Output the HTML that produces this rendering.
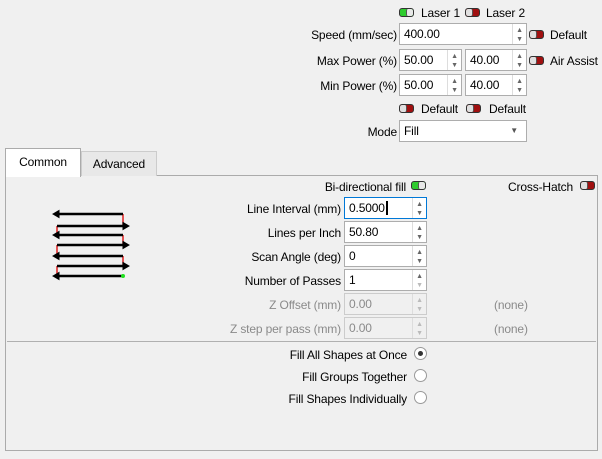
<!DOCTYPE html>
<html><head><meta charset="utf-8"><style>
*{box-sizing:border-box;margin:0;padding:0}
body{width:602px;height:459px;background:#f0f0f0;font-family:"Liberation Sans",sans-serif;font-size:12px;letter-spacing:-0.15px;color:#000;position:relative;overflow:hidden}
.a{position:absolute;white-space:nowrap}
.r{position:absolute;text-align:right;white-space:nowrap}
.in{position:absolute;background:#fff;border:1px solid #adadad;height:22px;line-height:20px;padding-left:4px}
.in.dis{background:#f0f0f0;border-color:#ccc;color:#8a8a8a}
.sp{position:absolute;right:0;top:0;width:14px;height:100%;border-left:1px solid #ddd;font-size:7px;line-height:9px;color:#666;text-align:center;padding-top:2px}
.dis .sp{color:#bbb}
.tg{position:absolute;width:15px;height:9px;border:1px solid #333;border-radius:3px;overflow:hidden}
.tg.on{background:#2ecc2e}.tg.on::after{content:"";position:absolute;right:0;top:0;width:6px;height:7px;background:#e8e8e8;border-left:1px solid #555;border-radius:2px}
.tg.off{background:#a01010}.tg.off::after{content:"";position:absolute;left:0;top:0;width:6px;height:7px;background:#e0e0e0;border-right:1px solid #555;border-radius:2px}
.rad{position:absolute;width:13px;height:13px;border:1px solid #999;border-radius:50%;background:#fff}
.lbl{color:#8a8a8a}
</style></head><body>
<div class="tg on" style="left:399px;top:8px"></div><div class="a" style="left:421px;top:6px">Laser 1</div>
<div class="tg off" style="left:465px;top:8px"></div><div class="a" style="left:486px;top:6px">Laser 2</div>

<div class="r" style="right:205px;top:28px">Speed (mm/sec)</div>
<div class="in" style="left:399px;top:23px;width:128px">400.00<div class="sp">▲<br>▼</div></div>
<div class="tg off" style="left:529px;top:30px"></div><div class="a" style="left:550px;top:28px">Default</div>

<div class="r" style="right:205px;top:54px">Max Power (%)</div>
<div class="in" style="left:399px;top:49px;width:63px">50.00<div class="sp">▲<br>▼</div></div>
<div class="in" style="left:465px;top:49px;width:62px">40.00<div class="sp">▲<br>▼</div></div>
<div class="tg off" style="left:529px;top:56px"></div><div class="a" style="left:550px;top:54px">Air Assist</div>

<div class="r" style="right:205px;top:79px">Min Power (%)</div>
<div class="in" style="left:399px;top:74px;width:63px">50.00<div class="sp">▲<br>▼</div></div>
<div class="in" style="left:465px;top:74px;width:62px">40.00<div class="sp">▲<br>▼</div></div>

<div class="tg off" style="left:399px;top:104px"></div><div class="a" style="left:421px;top:102px">Default</div>
<div class="tg off" style="left:466px;top:104px"></div><div class="a" style="left:489px;top:102px">Default</div>

<div class="r" style="right:205px;top:125px">Mode</div>
<div class="in" style="left:399px;top:120px;width:128px;background:#fff">Fill<span class="a" style="right:8px;top:0;font-size:8px;color:#555">▼</span></div>

<div class="a" style="left:5px;top:175px;width:593px;height:276px;border:1px solid #ababab;background:#f0f0f0"></div>
<div class="a" style="left:81px;top:151px;width:76px;height:25px;border:1px solid #ccc;border-bottom:none;background:#e8e8e8;text-align:center;line-height:24px">Advanced</div>
<div class="a" style="left:5px;top:148px;width:76px;height:29px;border:1px solid #ababab;border-bottom:none;background:#fff;text-align:center;line-height:27px">Common</div>

<div class="r" style="right:196px;top:180px">Bi-directional fill</div>
<div class="tg on" style="left:411px;top:181px"></div>
<div class="a" style="left:508px;top:180px">Cross-Hatch</div>
<div class="tg off" style="left:580px;top:181px"></div>

<svg class="a" style="left:45px;top:205px" width="90" height="80">
<g stroke="#e02020" stroke-width="1.5"><line x1="78" y1="9" x2="78" y2="21"/><line x1="12" y1="21" x2="12" y2="30"/><line x1="78" y1="30" x2="78" y2="40"/><line x1="12" y1="40" x2="12" y2="51"/><line x1="78" y1="51" x2="78" y2="61"/><line x1="12" y1="61" x2="12" y2="71"/></g>
<g stroke="#000" stroke-width="2.6" fill="#000">
<line x1="12" y1="9" x2="78" y2="9"/><polygon points="8,9 14,5.5 14,12.5" stroke-width="1"/>
<line x1="12" y1="21" x2="79" y2="21"/><polygon points="84,21 78,17.5 78,24.5" stroke-width="1"/>
<line x1="12" y1="30" x2="78" y2="30"/><polygon points="8,30 14,26.5 14,33.5" stroke-width="1"/>
<line x1="12" y1="40" x2="79" y2="40"/><polygon points="84,40 78,36.5 78,43.5" stroke-width="1"/>
<line x1="12" y1="51" x2="78" y2="51"/><polygon points="8,51 14,47.5 14,54.5" stroke-width="1"/>
<line x1="12" y1="61" x2="79" y2="61"/><polygon points="84,61 78,57.5 78,64.5" stroke-width="1"/>
<line x1="12" y1="71" x2="78" y2="71"/><polygon points="8,71 14,67.5 14,74.5" stroke-width="1"/>
</g><circle cx="78" cy="71" r="2" fill="#20e020"/></svg>

<div class="r" style="right:261px;top:202px">Line Interval (mm)</div>
<div class="in" style="left:344px;top:197px;width:83px;border-color:#0078d7">0.5000<span style="border-left:2px solid #000;margin-left:1px"></span><div class="sp">▲<br>▼</div></div>
<div class="r" style="right:261px;top:226px">Lines per Inch</div>
<div class="in" style="left:344px;top:221px;width:83px">50.80<div class="sp">▲<br>▼</div></div>
<div class="r" style="right:261px;top:250px">Scan Angle (deg)</div>
<div class="in" style="left:344px;top:245px;width:83px">0<div class="sp">▲<br>▼</div></div>
<div class="r" style="right:261px;top:274px">Number of Passes</div>
<div class="in" style="left:344px;top:269px;width:83px">1<div class="sp">▲<br><span style="color:#bbb">▼</span></div></div>
<div class="r lbl" style="right:261px;top:298px">Z Offset (mm)</div>
<div class="in dis" style="left:344px;top:293px;width:83px">0.00<div class="sp">▲<br>▼</div></div>
<div class="a lbl" style="left:494px;top:298px">(none)</div>
<div class="r lbl" style="right:261px;top:322px">Z step per pass (mm)</div>
<div class="in dis" style="left:344px;top:317px;width:83px">0.00<div class="sp">▲<br>▼</div></div>
<div class="a lbl" style="left:494px;top:322px">(none)</div>

<div class="a" style="left:7px;top:341px;width:589px;height:1px;background:#b0b0b0"></div>

<div class="r" style="right:195px;top:348px">Fill All Shapes at Once</div>
<div class="rad" style="left:414px;top:347px"><div style="position:absolute;left:3px;top:3px;width:5px;height:5px;border-radius:50%;background:#333"></div></div>
<div class="r" style="right:195px;top:370px">Fill Groups Together</div>
<div class="rad" style="left:414px;top:369px"></div>
<div class="r" style="right:195px;top:392px">Fill Shapes Individually</div>
<div class="rad" style="left:414px;top:391px"></div>
</body></html>
